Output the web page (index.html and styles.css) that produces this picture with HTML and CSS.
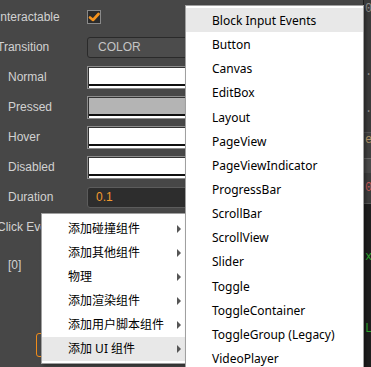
FILE: index.html
```html
<!DOCTYPE html>
<html lang="en">
<head>
    <meta charset="UTF-8">
    <title>Button Inspector</title>
    <link rel="stylesheet" href="styles.css">
</head>
<body>

<div class="screen">
    <!-- Inspector properties -->
    <div class="inspector">
        <div class="prop">
            <div class="label top">Interactable</div>
            <div class="checkbox">
                <svg width="12" height="12" viewBox="0 0 12 12"><path d="M2 6.5 L5 9 L10.5 3" fill="none" stroke="#f7941d" stroke-width="2.6" stroke-linecap="round" stroke-linejoin="round"/></svg>
            </div>
        </div>
        <div class="prop">
            <div class="label top">Transition</div>
            <div class="select">COLOR</div>
        </div>
        <div class="prop">
            <div class="label">Normal</div>
            <div class="color"><div class="swatch"></div></div>
        </div>
        <div class="prop">
            <div class="label">Pressed</div>
            <div class="color"><div class="swatch gray"></div></div>
        </div>
        <div class="prop">
            <div class="label">Hover</div>
            <div class="color"><div class="swatch"></div></div>
        </div>
        <div class="prop">
            <div class="label">Disabled</div>
            <div class="color"><div class="swatch"></div></div>
        </div>
        <div class="prop">
            <div class="label">Duration</div>
            <div class="number">0.1</div>
        </div>
        <div class="prop">
            <div class="label top">Click Events</div>
        </div>
        <div class="prop index">
            <div class="label">[0]</div>
        </div>
        <div class="add-btn"></div>
    </div>

    <!-- Neighbouring panel, mostly hidden -->
    <div class="side">
        <div class="side-block a">0</div>
        <div class="side-block b">.0</div>
        <div class="side-block c">.5</div>
        <div class="side-block d">er</div>
        <div class="side-block e"></div>
        <div class="side-block f">0</div>
        <div class="side-block code">
            <span>x</span>
            <span>L</span>
        </div>
    </div>

    <!-- Context menu -->
    <ul class="menu sub-left">
        <li>添加碰撞组件<span class="arrow"></span></li>
        <li>添加其他组件<span class="arrow"></span></li>
        <li>物理<span class="arrow"></span></li>
        <li>添加渲染组件<span class="arrow"></span></li>
        <li>添加用户脚本组件<span class="arrow"></span></li>
        <li class="active">添加 UI 组件<span class="arrow"></span></li>
    </ul>

    <ul class="menu sub-right">
        <li class="active">Block Input Events</li>
        <li>Button</li>
        <li>Canvas</li>
        <li>EditBox</li>
        <li>Layout</li>
        <li>PageView</li>
        <li>PageViewIndicator</li>
        <li>ProgressBar</li>
        <li>ScrollBar</li>
        <li>ScrollView</li>
        <li>Slider</li>
        <li>Toggle</li>
        <li>ToggleContainer</li>
        <li>ToggleGroup (Legacy)</li>
        <li>VideoPlayer</li>
    </ul>
</div>

</body>
</html>
```

FILE: styles.css
```css
body {
    margin: 0;
    padding: 0;
    background-color: #474747;
    font-family: 'Liberation Sans', Arial, sans-serif;
    overflow: hidden;
}
.screen {
    position: relative;
    width: 371px;
    height: 367px;
    display: flex;
    overflow: hidden;
}
.inspector {
    width: 364px;
    padding-top: 2px;
    overflow: hidden;
}
.prop {
    height: 30px;
    display: flex;
    align-items: center;
}
.label {
    width: 79px;
    padding-left: 8px;
    font-size: 12px;
    color: #d2d2d2;
    white-space: nowrap;
    flex-shrink: 0;
}
.label.top {
    margin-left: -10px;
    padding-left: 7px;
    width: 90px;
}
.prop.index {
    height: 17px;
    margin-top: 14px;
}
.checkbox {
    width: 12px;
    height: 12px;
    border: 1px solid #8a8a8a;
    background: #2b2b2b;
    display: flex;
    align-items: center;
    justify-content: center;
}
.select {
    width: 270px;
    height: 19px;
    border: 1px solid #2a2a2a;
    border-radius: 3px;
    background: #4c4c4c;
    color: #c4c4c4;
    font-size: 12px;
    line-height: 19px;
    padding-left: 10px;
}
.color {
    width: 276px;
    height: 23px;
    border: 1px solid #8d8d8d;
    background: #333;
    padding: 1px;
    box-sizing: border-box;
}
.swatch {
    height: 16px;
    background: #fff;
    border-bottom: 2px solid #111;
    box-shadow: 0 2px 0 #fff;
}
.swatch.gray {
    background: #b4b4b4;
}
.number {
    width: 270px;
    height: 19px;
    border: 1px solid #5c5c5c;
    border-radius: 3px;
    background: #2d2d2d;
    color: #f29a2e;
    font-size: 12px;
    line-height: 19px;
    padding-left: 8px;
}
.add-btn {
    margin: 60px 0 0 36px;
    width: 200px;
    height: 22px;
    border: 1px solid #f08c1a;
    border-radius: 3px;
}
.side {
    width: 7px;
    border-left: 1px solid #1f1f1f;
    background: #2c2c2c;
    display: flex;
    flex-direction: column;
    font-family: 'Liberation Mono', monospace;
    font-size: 12px;
    color: #8a8a8a;
    overflow: hidden;
}
.side-block {
    padding-left: 1px;
    white-space: nowrap;
}
.side-block.a { height: 40px; background: #3a3a3a; padding-top: 2px; }
.side-block.b { height: 60px; background: #3a3a3a; line-height: 60px; }
.side-block.c { height: 30px; background: #3a3a3a; }
.side-block.d { height: 25px; background: #404040; color: #b59a6a; border-top: 1px solid #555; }
.side-block.e { height: 14px; background: #4a4a4a; border-top: 1px solid #666; }
.side-block.f { height: 30px; background: #3c3c3c; color: #c45a5a; line-height: 30px; }
.side-block.code {
    flex: 1;
    background: #1e1e1e;
    color: #2fa82f;
    display: flex;
    flex-direction: column;
    gap: 58px;
    padding-top: 46px;
    border-top: 1px solid #555;
}
.menu {
    position: absolute;
    margin: 0;
    padding: 3px 0 2px;
    list-style: none;
    background: #fff;
    border: 1px solid #a0a0a0;
    box-shadow: 2px 2px 3px rgba(0, 0, 0, 0.35);
    font-family: 'Noto Sans', 'Noto Sans CJK SC', sans-serif;
    font-size: 12px;
    color: #000;
}
.menu li {
    position: relative;
    height: 24px;
    line-height: 24px;
    padding-left: 26px;
    white-space: nowrap;
}
.menu li.active {
    background: #e8e8e8;
}
.sub-left {
    left: 41px;
    top: 213px;
    width: 150px;
}
.sub-right {
    left: 185px;
    top: 5px;
    width: 177px;
    padding-top: 2px;
}
.sub-right li {
    height: 24.15px;
    line-height: 25px;
}
.arrow {
    position: absolute;
    left: 135px;
    top: 8px;
    width: 0;
    height: 0;
    border-left: 4px solid #555;
    border-top: 4px solid transparent;
    border-bottom: 4px solid transparent;
}
```
